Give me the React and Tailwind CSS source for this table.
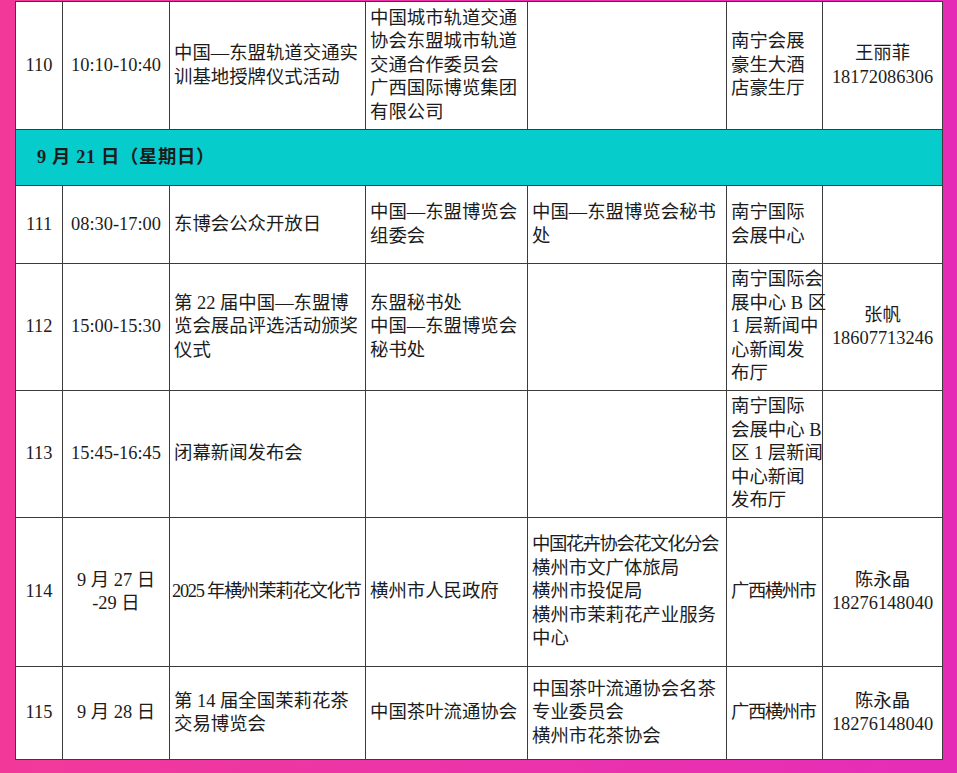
import React from "react";

const C = ({ children, className = "", align = "left", ...rest }) => (
  <td
    {...rest}
    className={
      "border-[1.5px] border-[#3d3a3c] align-middle px-[4px] py-0 " +
      (align === "center" ? "text-center " : "text-left ") +
      className
    }
  >
    {children}
  </td>
);

const L = ({ lines }) => (
  <>
    {lines.map((l, i) => (
      <div key={i} className="whitespace-nowrap">
        {l}
      </div>
    ))}
  </>
);

export default function App() {
  return (
    <div className="w-[957px] h-[773px] overflow-hidden bg-gradient-to-r from-[#f2399a] to-[#e52cb8] px-[15px] pt-[1px] pb-[14px]">
      <table className="w-[927px] table-fixed border-collapse bg-white text-[#1c1c1c] text-[18.4px] leading-[23.5px] font-[family-name:'Liberation_Serif','Noto_Sans_CJK_SC',serif]">
        <colgroup>
          <col className="w-[47px]" />
          <col className="w-[107px]" />
          <col className="w-[196px]" />
          <col className="w-[162px]" />
          <col className="w-[199px]" />
          <col className="w-[96px]" />
          <col className="w-[120px]" />
        </colgroup>
        <tbody>
          <tr className="h-[128px]">
            <C align="center">110</C>
            <C align="center">10:10-10:40</C>
            <C>
              <L lines={["中国—东盟轨道交通实", "训基地授牌仪式活动"]} />
            </C>
            <C>
              <L
                lines={[
                  "中国城市轨道交通",
                  "协会东盟城市轨道",
                  "交通合作委员会",
                  "广西国际博览集团",
                  "有限公司",
                ]}
              />
            </C>
            <C></C>
            <C>
              <L lines={["南宁会展", "豪生大酒", "店豪生厅"]} />
            </C>
            <C align="center">
              <L lines={["王丽菲", "18172086306"]} />
            </C>
          </tr>
          <tr className="h-[56px]">
            <td
              colSpan={7}
              className="border-[1.5px] border-[#3d3a3c] bg-[#07cccc] pl-[21px] font-bold align-middle tracking-[0.6px]"
            >
              9 月 21 日（星期日）
            </td>
          </tr>
          <tr className="h-[78px]">
            <C align="center">111</C>
            <C align="center">08:30-17:00</C>
            <C>东博会公众开放日</C>
            <C>
              <L lines={["中国—东盟博览会", "组委会"]} />
            </C>
            <C>
              <L lines={["中国—东盟博览会秘书", "处"]} />
            </C>
            <C>
              <L lines={["南宁国际", "会展中心"]} />
            </C>
            <C></C>
          </tr>
          <tr className="h-[127px]">
            <C align="center">112</C>
            <C align="center">15:00-15:30</C>
            <C>
              <L lines={["第 22 届中国—东盟博", "览会展品评选活动颁奖", "仪式"]} />
            </C>
            <C>
              <L lines={["东盟秘书处", "中国—东盟博览会", "秘书处"]} />
            </C>
            <C></C>
            <C>
              <L
                lines={["南宁国际会", "展中心 B 区", "1 层新闻中", "心新闻发", "布厅"]}
              />
            </C>
            <C align="center">
              <L lines={["张帆", "18607713246"]} />
            </C>
          </tr>
          <tr className="h-[127px]">
            <C align="center">113</C>
            <C align="center">15:45-16:45</C>
            <C>闭幕新闻发布会</C>
            <C></C>
            <C></C>
            <C>
              <L lines={["南宁国际", "会展中心 B", "区 1 层新闻", "中心新闻", "发布厅"]} />
            </C>
            <C></C>
          </tr>
          <tr className="h-[149px]">
            <C align="center">114</C>
            <C align="center">
              <L lines={["9 月 27 日", "-29 日"]} />
            </C>
            <C className="!px-[2px]">
              <div className="whitespace-nowrap tracking-[-1.3px]">2025 年横州茉莉花文化节</div>
            </C>
            <C>横州市人民政府</C>
            <C>
              <div className="whitespace-nowrap tracking-[-1.5px]">中国花卉协会花文化分会</div>
              <L lines={["横州市文广体旅局", "横州市投促局", "横州市茉莉花产业服务", "中心"]} />
            </C>
            <C>
              <div className="whitespace-nowrap tracking-[-1.5px]">广西横州市</div>
            </C>
            <C align="center">
              <L lines={["陈永晶", "18276148040"]} />
            </C>
          </tr>
          <tr className="h-[93px]">
            <C align="center">115</C>
            <C align="center">9 月 28 日</C>
            <C>
              <L lines={["第 14 届全国茉莉花茶", "交易博览会"]} />
            </C>
            <C>中国茶叶流通协会</C>
            <C>
              <L lines={["中国茶叶流通协会名茶", "专业委员会", "横州市花茶协会"]} />
            </C>
            <C>
              <div className="whitespace-nowrap tracking-[-1.5px]">广西横州市</div>
            </C>
            <C align="center">
              <L lines={["陈永晶", "18276148040"]} />
            </C>
          </tr>
        </tbody>
      </table>
    </div>
  );
}
